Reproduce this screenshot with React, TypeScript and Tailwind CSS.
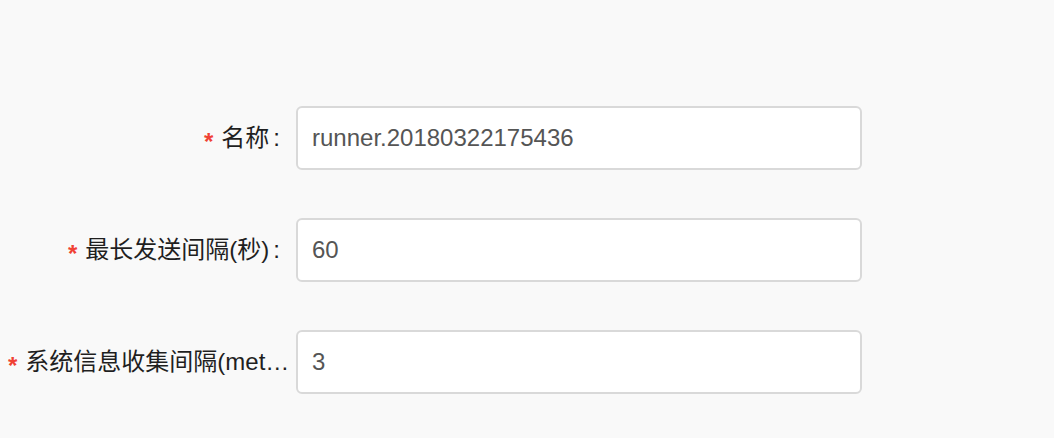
const font = { fontFamily: '"Liberation Sans", "Noto Sans CJK SC", sans-serif' };

const fields = [
  { label: "名称", value: "runner.20180322175436" },
  { label: "最长发送间隔(秒)", value: "60" },
  { label: "系统信息收集间隔(metrics)", value: "3" },
];

export default function App() {
  return (
    <div className="min-h-screen w-full bg-[#f9f9f9] pt-[106px]" style={font}>
      <form className="flex flex-col gap-12">
        {fields.map((f) => (
          <div key={f.label} className="flex items-center h-16">
            {/* Label column */}
            <div className="w-[296px] shrink-0 pl-2 text-right whitespace-nowrap overflow-hidden text-ellipsis text-[24px] leading-[64px] text-[#1f1f1f]">
              <span className="inline-block translate-y-[4px] mr-2 text-[#f04134] font-bold">*</span>
              <span className="after:content-[':'] after:ml-1 after:mr-4">{f.label}</span>
            </div>
            {/* Input */}
            <input
              readOnly
              value={f.value}
              className="w-[566px] h-16 rounded-md border-2 border-[#d9d9d9] bg-white px-[14px] text-[24px] text-[#555] outline-none"
            />
          </div>
        ))}
      </form>
    </div>
  );
}
